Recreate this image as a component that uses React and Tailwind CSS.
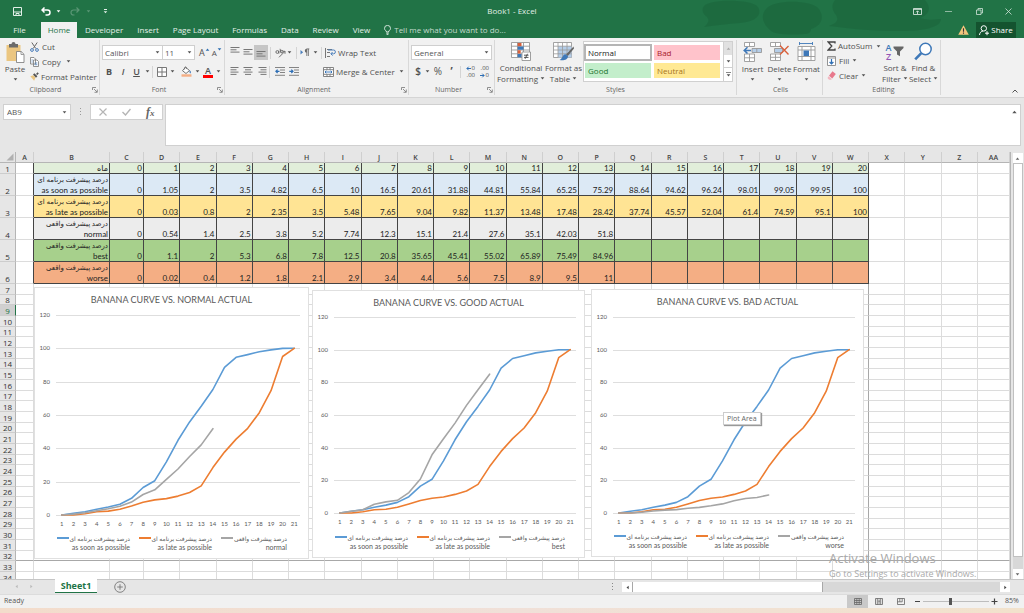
import React, { useState } from 'react';
import clsx from 'clsx';

const ui = "font-['Open_Sans','Noto_Sans','DejaVu_Sans',sans-serif]";
const calibri = "font-['Lato','DejaVu_Sans',sans-serif]";

const soon = [0, 1.05, 2, 3.5, 4.82, 6.5, 10, 16.5, 20.61, 31.88, 44.81, 55.84, 65.25, 75.29, 88.64, 94.62, 96.24, 98.01, 99.05, 99.95, 100];
const late = [0, 0.03, 0.8, 2, 2.35, 3.5, 5.48, 7.65, 9.04, 9.82, 11.37, 13.48, 17.48, 28.42, 37.74, 45.57, 52.04, 61.4, 74.59, 95.1, 100];
const normal = [0, 0.54, 1.4, 2.5, 3.8, 5.2, 7.74, 12.3, 15.1, 21.4, 27.6, 35.1, 42.03, 51.8];
const best = [0, 1.1, 2, 5.3, 6.8, 7.8, 12.5, 20.8, 35.65, 45.41, 55.02, 65.89, 75.49, 84.96];
const worse = [0, 0.02, 0.4, 1.2, 1.8, 2.1, 2.9, 3.4, 4.4, 5.6, 7.5, 8.9, 9.5, 11];
const months = Array.from({ length: 21 }, (_, i) => i);

const planned = 'درصد پیشرفت برنامه ای';
const actual = 'درصد پیشرفت واقعی';

const columns = 'A B C D E F G H I J K L M N O P Q R S T U V W X Y Z AA'.split(' ');

const dataRows = [
  { fa: planned, en: 'as soon as possible', values: soon, bg: 'bg-[#dce9f5]' },
  { fa: planned, en: 'as late as possible', values: late, bg: 'bg-[#ffe494]' },
  { fa: actual, en: 'normal', values: normal, bg: 'bg-[#ececec]' },
  { fa: actual, en: 'best', values: best, bg: 'bg-[#a7d08c]' },
  { fa: actual, en: 'worse', values: worse, bg: 'bg-[#f4ae84]' },
];

const tabs = ['Developer', 'Insert', 'Page Layout', 'Formulas', 'Data', 'Review', 'View'];

const Caret = ({ className }) => (
  <svg className={clsx('w-[5px] h-[3px] shrink-0', className)} viewBox="0 0 5 3">
    <path d="M0.7 0.3h3.6L2.5 2.5z" fill="currentColor" />
  </svg>
);

const Sep = () => <span className="w-px h-3 bg-[#d4d4d4] shrink-0" />;

const IconButton = ({ label, className, children }) => (
  <button aria-label={label} className={clsx('flex items-center justify-center shrink-0', className)}>
    {children}
  </button>
);

const Lines = ({ widths, align = 'left', top = 1 }) => (
  <svg width="10" height="11" viewBox="0 0 10 11" stroke="#777" strokeWidth="1">
    {widths.map((w, i) => {
      const x = align === 'left' ? 0.5 : align === 'right' ? 9.5 - w : 5 - w / 2;
      return <path key={i} d={`M${x} ${top + i * 2.3 + 0.5}h${w}`} />;
    })}
  </svg>
);

const Group = ({ title, launcher, className, children }) => (
  <section className={clsx('flex flex-col border-r border-[#d8d8d8] my-[2px] shrink-0', className)}>
    <div className="flex-1 flex min-h-0">{children}</div>
    <div className="h-[11px] flex items-center text-[#666]">
      <span className="flex-1 text-center leading-[11px] text-[7px]">{title}</span>
      {launcher && (
        <IconButton label={`${title} settings`} className="w-2 h-2">
          <svg width="6" height="6" viewBox="0 0 6 6" fill="none" stroke="#777" strokeWidth="0.8">
            <path d="M0.5 3V0.5H4M2 2l3 3M5.3 2.5v2.8H2.5" />
          </svg>
        </IconButton>
      )}
    </div>
  </section>
);

const BigButton = ({ icon, lines, caretBelow, className }) => (
  <button className={clsx('flex flex-col items-center pt-px shrink-0 leading-[11px]', className)}>
    <span className="h-[22px] flex items-center">{icon}</span>
    {lines.map((line, i) => (
      <span key={line} className="flex items-center gap-[2px] whitespace-nowrap">
        {line}
        {!caretBelow && i === lines.length - 1 && <Caret />}
      </span>
    ))}
    {caretBelow && <Caret className="mt-[4px]" />}
  </button>
);

const TitleBar = () => (
  <header className="relative bg-[#217346] text-white">
    {/* title bar artwork */}
    <svg className="absolute right-[70px] top-0" width="260" height="38" viewBox="0 0 260 38" fill="#1a643b" opacity="0.55">
      <path d="M10 6c6-7 48-7 54 1 5 9-4 15-18 16-12 1-24 2-36 4 4-4 6-6 3-10-4-3-6-7-3-11z" />
      <path d="M72 9c8-10 46-9 53 0 6 9 2 17-8 20 0 3-2 5-7 5-12 1-30 1-34-4-7-6-10-14-4-21z" />
      <path d="M141 0h90c7 8 4 15-5 18 10 3 17 1 21 1 0 9-20 12-38 12-28 0-52-2-74-5 8-3 10-6 7-11-4-5-5-10-1-15z" />
    </svg>
    <div className="relative h-[22px] flex items-center">
      <div className="flex-1 flex items-center pl-3">
        <IconButton label="Save" className="w-[11px]">
          <svg width="9" height="9" viewBox="0 0 9 9" fill="none" stroke="#e3efe8" strokeWidth="1">
            <path d="M0.5 0.5h8v8h-8zM0.5 5h8M3 8.5V6.5h3v2" />
          </svg>
        </IconButton>
        <IconButton label="Undo" className="w-[10px] ml-[18px]">
          <svg width="10" height="9" viewBox="0 0 10 9" fill="none" stroke="#fff" strokeWidth="1.5">
            <path d="M3.5 0.5L1 3l2.5 2.5M1 3h5.5a2.5 2.5 0 010 5H4.5" />
          </svg>
        </IconButton>
        <Caret className="ml-[5px]" />
        <IconButton label="Redo" className="w-[10px] ml-[9px] opacity-25">
          <svg width="10" height="9" viewBox="0 0 10 9" fill="none" stroke="#fff" strokeWidth="1.2">
            <path d="M6.5 0.5L9 3 6.5 5.5M9 3H3.5a2.5 2.5 0 000 5h1" />
          </svg>
        </IconButton>
        <Caret className="ml-[6px] opacity-25" />
        <IconButton label="Customize toolbar" className="ml-[12px] w-[5px]">
          <svg width="5" height="5" viewBox="0 0 5 5" fill="#e3efe8"><path d="M1 0h3v0.9H1zM0.7 2.2h3.6L2.5 4.3z" /></svg>
        </IconButton>
      </div>
      <h1 className="text-[8px] text-[#e3efe8]">Book1 - Excel</h1>
      <div className="flex-1 flex items-center justify-end gap-[21px] pr-3">
        <IconButton label="Ribbon display options" className="w-[9px] mr-[2px]">
          <svg width="9" height="7" viewBox="0 0 9 7" fill="none" stroke="#e6f0ea" strokeWidth="0.8">
            <path d="M0.5 0.5h8v6h-8zM0.5 1.4h8M4.5 6V3M3 4.3L4.5 2.8 6 4.3" />
          </svg>
        </IconButton>
        <IconButton label="Minimize" className="w-[7px]"><span className="w-[7px] h-px bg-[#8fb8a1]" /></IconButton>
        <IconButton label="Restore" className="w-[8px] ml-[2px]">
          <svg width="7" height="7" viewBox="0 0 7 7" fill="none" stroke="#d3e4da" strokeWidth="0.8">
            <path d="M0.5 2h4.5v4.5H0.5zM2 2V0.5h4.5V5H5" />
          </svg>
        </IconButton>
        <IconButton label="Close" className="w-[8px]">
          <svg width="7" height="7" viewBox="0 0 7 7" stroke="#d3e4da" strokeWidth="0.8"><path d="M0.5 0.5l6 6M6.5 0.5l-6 6" /></svg>
        </IconButton>
      </div>
    </div>
    <nav className="relative h-4 flex items-center text-[8px] text-[#e3efe8]">
      <button className="w-[39px]">File</button>
      <button className="w-[36px] h-4 ml-[2px] mr-px bg-[#f1f1f1] text-[#217346]">Home</button>
      {tabs.map((t) => (
        <button key={t} className="mx-[7px] whitespace-nowrap">{t}</button>
      ))}
      <label className="flex items-center flex-1 gap-[3px] ml-[7px]">
        <svg width="7" height="10" viewBox="0 0 7 10" fill="none" stroke="#e3efe8" strokeWidth="0.9">
          <path d="M2.3 7V6C0.9 5.2 0.5 4.3 0.5 3.4a3 3 0 016 0c0 .9-.4 1.8-1.8 2.6v1zM2.3 8.2h2.4M2.6 9.4h1.8" />
        </svg>
        <input
          aria-label="Tell me"
          placeholder="Tell me what you want to do..."
          className="w-[150px] bg-transparent outline-none placeholder:text-[#c3dacd]"
        />
      </label>
      <svg width="11" height="10" viewBox="0 0 11 10" className="mr-[7px]">
        <path d="M5.5 0.3L10.8 9.7H0.2z" fill="#f2c57c" />
        <path d="M5.5 3.2v3.6M5.5 7.6v1.2" stroke="#333" strokeWidth="1.1" />
      </svg>
      <button className="h-4 w-[40px] mr-[8px] bg-[#14532f] flex items-center justify-center gap-[2px] text-white">
        <svg width="10" height="11" viewBox="0 0 10 11" fill="none" stroke="#fff" strokeWidth="1">
          <circle cx="4.8" cy="3.4" r="2.7" />
          <path d="M0.5 10c.2-2.3 1.6-3.7 3.4-3.9M6 8.2h4M8 6.2v4" />
        </svg>
        Share
      </button>
    </nav>
  </header>
);

const Select = ({ label, value, className }) => (
  <span className={clsx('relative flex items-center h-[15px] bg-white border border-[#cfcfcf]', className)}>
    <select aria-label={label} className="appearance-none w-full h-full pl-[2px] bg-transparent outline-none text-[#555]">
      <option>{value}</option>
    </select>
    <Caret className="absolute right-[2px] pointer-events-none" />
  </span>
);

const ClipboardGroup = () => (
  <Group title="Clipboard" launcher className="w-[100px]">
    <BigButton
      className="w-[30px]"
      caretBelow
      lines={['Paste']}
      icon={
        <svg width="19" height="21" viewBox="0 0 19 21">
          <path d="M0.5 3h14v16h-14z" fill="#ebc681" />
          <path d="M3 2h2.5a2 2 0 014 0H12v3.5H3z" fill="#6b6b6b" />
          <path d="M10.5 9.5h4.7l2.8 2.8v8.2h-7.5z" fill="#fff" stroke="#777" strokeWidth="0.8" />
          <path d="M15 9.7v2.8h2.8" fill="none" stroke="#777" strokeWidth="0.7" />
        </svg>
      }
    />
    <div className="flex flex-col items-start gap-[4px] pt-px">
      <button className="flex items-center gap-[3px] h-[11px]">
        <svg width="9" height="10" viewBox="0 0 9 10" fill="none" strokeWidth="1">
          <path d="M1.8 0.5l4 6M7.2 0.5l-4 6" stroke="#666" />
          <circle cx="2" cy="8" r="1.4" stroke="#4a7ebb" /><circle cx="7" cy="8" r="1.4" stroke="#4a7ebb" />
        </svg>
        Cut
      </button>
      <button className="flex items-center gap-[3px] h-[11px]">
        <svg width="9" height="10" viewBox="0 0 9 10" fill="#fff" stroke="#777" strokeWidth="0.8">
          <path d="M0.5 0.5h3.5l1.5 1.5v5h-5zM3.5 3h3.5l1.5 1.5v5h-5z" />
          <path d="M4.7 6h2.6M4.7 7.7h2.6M1.5 3h1.3M1.5 5h1.3" stroke="#4a7ebb" />
        </svg>
        Copy <Caret className="ml-[2px]" />
      </button>
      <button className="flex items-center gap-[2px] h-[11px] whitespace-nowrap">
        <svg width="9" height="9" viewBox="0 0 9 9">
          <path d="M0.3 4.2l3-1 2.2 2.3-1.4 3.2z" fill="#ebc681" />
          <path d="M3 2.6l1.4-1.3 3 3L6 5.7zM6 2l1.6-1.8L8.8 1.4 7.3 3z" fill="#555" />
        </svg>
        Format Painter
      </button>
    </div>
  </Group>
);

const FontGroup = () => (
  <Group title="Font" launcher className="w-[125px] pl-[2px]">
    <div className="flex flex-col gap-[5px] pt-[5px]">
      <div className="flex items-center">
        <Select label="Font" value="Calibri" className="w-[61px]" />
        <Select label="Font size" value="11" className="w-[33px] -ml-px" />
        <IconButton label="Increase font size" className="ml-[4px] text-[9px]">
          A<Caret className="rotate-180 mb-[7px] text-[#2b6cb0]" />
        </IconButton>
        <IconButton label="Decrease font size" className="ml-[2px] text-[8px]">
          A<Caret className="mb-[7px] text-[#2b6cb0]" />
        </IconButton>
      </div>
      <div className="flex items-center h-[13px] text-[9px]">
        <IconButton label="Bold" className="w-[14px] font-bold">B</IconButton>
        <IconButton label="Italic" className="w-[14px] italic font-semibold">I</IconButton>
        <IconButton label="Underline" className="w-[13px] underline font-semibold">U</IconButton>
        <Caret className="mx-[2px]" />
        <Sep />
        <IconButton label="Borders" className="ml-[4px]">
          <svg width="10" height="10" viewBox="0 0 10 10" fill="#fff" stroke="#777"><path d="M0.5 0.5h9v9h-9zM5 0.5v9M0.5 5h9" /></svg>
        </IconButton>
        <Caret className="mx-[3px]" />
        <IconButton label="Fill color" className="ml-[3px]">
          <svg width="11" height="11" viewBox="0 0 11 11">
            <path d="M4.5 1.2L8.5 4.5 5 7.5 1.5 4.7z" fill="#fff" stroke="#666" strokeWidth="0.9" />
            <path d="M3.6 3.5V1.5a1 1 0 011.8 0v1.5" fill="none" stroke="#666" strokeWidth="0.7" />
            <path d="M8.6 4.2c1.5.8 1.6 2 .9 3.4-1-.8-1.3-1.7-.9-3.4z" fill="#4a7ebb" />
            <path d="M0.5 8.3h10v2.4h-10z" fill="#f4ae84" />
          </svg>
        </IconButton>
        <Caret className="mx-[3px]" />
        <IconButton label="Font color" className="w-[10px] flex-col leading-[10px] font-semibold">
          A<span className="w-[10px] h-[3px] -mt-px bg-[#ff0000]" />
        </IconButton>
        <Caret className="ml-[3px]" />
      </div>
    </div>
  </Group>
);

const AlignmentGroup = () => (
  <Group title="Alignment" launcher className="w-[184px] pl-[3px]">
    <div className="flex flex-col gap-[5px] pt-[5px]">
      <div className="flex items-center h-[15px]">
        <IconButton label="Top align" className="w-[13px] h-[15px]"><Lines widths={[9, 6, 9]} top={0} /></IconButton>
        <IconButton label="Middle align" className="w-[13px] h-[15px]"><Lines widths={[9, 6, 9]} top={2} /></IconButton>
        <IconButton label="Bottom align" className="w-[14px] h-[15px] bg-[#c6c6c6]"><Lines widths={[9, 6, 9]} top={4} /></IconButton>
        <span className="w-px h-3 mx-[2px] bg-[#d4d4d4]" />
        <IconButton label="Orientation" className="ml-[2px]">
          <svg width="11" height="10" viewBox="0 0 11 10" fill="none" stroke="#666" strokeWidth="0.9">
            <circle cx="2.3" cy="4" r="1.4" /><path d="M3.9 2.6v3M5 0.8l1.2 4" /><circle cx="6.8" cy="3.6" r="1.3" />
            <path d="M4 9.3l6-6M10 5.8V3.3H7.6" />
          </svg>
        </IconButton>
        <Caret className="ml-px mr-[4px]" />
        <Sep />
        <IconButton label="Text direction" className="ml-[3px]">
          <svg width="10" height="9" viewBox="0 0 10 9">
            <path d="M0.5 2v4.4l2.6-2.2z" fill="#4a7ebb" />
            <path d="M6.8 0.9V8M8.4 0.9V8M9.3 0.9H6.6" stroke="#666" strokeWidth="0.8" fill="none" />
            <path d="M6.8 0.7a2 2 0 000 4z" fill="#666" />
          </svg>
        </IconButton>
        <Caret className="ml-[3px] mr-[3px]" />
        <Sep />
        <button className="flex items-center gap-[2px] ml-[3px] whitespace-nowrap">
          <svg width="11" height="10" viewBox="0 0 11 10" fill="none" strokeWidth="1">
            <path d="M0.5 0v10M2 1.5h5M2 4.5h3M2 8.5h3" stroke="#777" />
            <path d="M3 2h5.5a1.7 1.7 0 010 3.8H6M7.6 4L5.8 5.8l1.8 1.8" stroke="#4a7ebb" />
          </svg>
          Wrap Text
        </button>
      </div>
      <div className="flex items-center h-[13px]">
        <IconButton label="Align left" className="w-[13px]"><Lines widths={[8, 6, 8, 6]} /></IconButton>
        <IconButton label="Center" className="w-[14px]"><Lines widths={[9, 6, 9, 6]} align="center" /></IconButton>
        <IconButton label="Align right" className="w-[14px]"><Lines widths={[8, 6, 8, 6]} align="right" /></IconButton>
        <Sep />
        <IconButton label="Decrease indent" className="ml-[5px]">
          <svg width="10" height="9" viewBox="0 0 10 9" stroke="#777" strokeWidth="0.9" fill="none">
            <path d="M0 0.5h10M5 3h5M5 5.5h5M0 8.3h10" /><path d="M4.5 4.3H1M2.6 2.6L0.9 4.3 2.6 6" stroke="#2f6fb5" strokeWidth="1.2" />
          </svg>
        </IconButton>
        <IconButton label="Increase indent" className="ml-[4px]">
          <svg width="10" height="9" viewBox="0 0 10 9" stroke="#777" strokeWidth="0.9" fill="none">
            <path d="M0 0.5h10M5 3h5M5 5.5h5M0 8.3h10" /><path d="M0.3 4.3h3.5M2.3 2.6L4 4.3 2.3 6" stroke="#2f6fb5" strokeWidth="1.2" />
          </svg>
        </IconButton>
        <button className="flex items-center gap-[2px] ml-[24px] whitespace-nowrap">
          <svg width="11" height="10" viewBox="0 0 11 10" fill="#fff" stroke="#777" strokeWidth="0.9">
            <path d="M0.5 0.5h10v9h-10zM0.5 2.7h10M0.5 7.3h10M4 0.5v2.2M7 0.5v2.2M4 7.3v2.2M7 7.3v2.2" />
            <path d="M2 5h7M3.3 3.7L2 5l1.3 1.3M7.7 3.7L9 5 7.7 6.3" stroke="#2f6fb5" fill="none" />
          </svg>
          Merge &amp; Center
          <Caret className="ml-[2px]" />
        </button>
      </div>
    </div>
  </Group>
);

const DecimalIcon = ({ increase }) => (
  <span className="grid grid-cols-2 w-[9px] text-[6px] leading-[7px] text-right">
    <svg width="5" height="5" viewBox="0 0 5 5" className={increase ? 'mt-px' : 'order-3 mt-px rotate-180'} fill="none" stroke="#2f6fb5">
      <path d="M5 2.5H1M2.7 0.7L0.9 2.5l1.8 1.8" />
    </svg>
    <span className={increase ? 'text-right' : 'order-4'}>0</span>
    <span className="col-span-2">.00</span>
  </span>
);

const NumberGroup = () => (
  <Group title="Number" launcher className="w-[86px] pl-[2px]">
    <div className="flex flex-col gap-[5px] pt-[5px]">
      <Select label="Number format" value="General" className="w-[81px]" />
      <div className="flex items-center h-[13px] text-[10px]">
        <IconButton label="Currency" className="w-[14px] font-semibold">$</IconButton>
        <Caret />
        <IconButton label="Percent style" className="w-[16px]">%</IconButton>
        <IconButton label="Comma style" className="w-[11px] font-bold">’</IconButton>
        <span className="w-[3px]" />
        <Sep />
        <IconButton label="Increase decimal" className="ml-[5px]"><DecimalIcon increase /></IconButton>
        <IconButton label="Decrease decimal" className="ml-[5px]"><DecimalIcon /></IconButton>
      </div>
    </div>
  </Group>
);

const gallery = [
  ['Normal', 'bg-white text-[#222] outline-2 -outline-offset-1 outline-[#b5b5b5]'],
  ['Bad', 'bg-[#ffc3cb] text-[#a8202c]'],
  ['Good', 'bg-[#c3eecb] text-[#1c7430]'],
  ['Neutral', 'bg-[#ffe994] text-[#a8741c]'],
];

const StylesGroup = () => (
  <Group title="Styles" className="w-[242px]">
    <BigButton
      className="w-[50px] ml-px"
      lines={['Conditional', 'Formatting']}
      icon={
        <svg width="20" height="19" viewBox="0 0 20 19">
          <path d="M0.5 0.5h18v15h-18zM0.5 4.2h18M0.5 8h18M0.5 11.8h18M6.5 0.5v15M12.5 0.5v15" fill="#fff" stroke="#999" strokeWidth="0.9" />
          <path d="M6.7 1h3.8v3.2H6.7zM6.7 8.2h3v3.4h-3z" fill="#d9603b" /><path d="M6.7 4.5h5.8v3.3H6.7zM6.7 12h4v3.2h-4z" fill="#3e78b8" />
          <path d="M11 10h8.5v8.5H11z" fill="#fff" stroke="#888" strokeWidth="0.8" />
          <path d="M13 13.2h4.5M13 15.4h4.5M16.5 11.8l-2.4 5" stroke="#444" strokeWidth="0.9" />
        </svg>
      }
    />
    <BigButton
      className="w-[35px]"
      lines={['Format as', 'Table']}
      icon={
        <svg width="21" height="19" viewBox="0 0 21 19">
          <path d="M0.5 0.5h18v15h-18z" fill="#fff" stroke="#999" strokeWidth="0.9" />
          <path d="M5 4.2h13.5v11.3H5z" fill="#b4cde8" />
          <path d="M0.5 4.2h18M0.5 8h18M0.5 11.8h18M5 0.5v15M9.5 0.5v15M14 0.5v15" stroke="#999" strokeWidth="0.8" />
          <path d="M20.5 4.5L13 12.5l1.8 1.6L21 6.5z" fill="#666" /><path d="M12.6 12.3c-3 0-2.5 3.8-6 5.7 4 .7 8 0 8.4-3.8z" fill="#3e78b8" />
        </svg>
      }
    />
    <div className="flex ml-[2px] mt-px h-[41px] flex-1 mr-[3px] border border-[#d0d0d0] bg-white text-[8px]">
      <div className="flex-1 grid grid-cols-2 gap-[3px] p-[3px] pl-px">
        {gallery.map(([name, style]) => (
          <button key={name} className={clsx('text-left pl-[3px]', style)}>{name}</button>
        ))}
      </div>
      <div className="w-[9px] flex flex-col border-l border-[#d0d0d0]">
        <IconButton label="Scroll styles up" className="flex-1 bg-[#e1e1e1] text-[#aaa]"><Caret className="rotate-180" /></IconButton>
        <IconButton label="Scroll styles down" className="flex-1"><Caret /></IconButton>
        <IconButton label="More styles" className="flex-1 flex-col gap-px border-t border-[#d0d0d0]">
          <span className="w-[5px] h-px bg-[#888]" /><Caret />
        </IconButton>
      </div>
    </div>
  </Group>
);

const CellsGroup = () => (
  <Group title="Cells" className="w-[86px] pl-[2px]">
    <BigButton
      className="w-[27px]"
      caretBelow
      lines={['Insert']}
      icon={
        <svg width="19" height="20" viewBox="0 0 19 20" fill="#fff" stroke="#999" strokeWidth="0.9">
          <path d="M1.5 0.5h10v4h-10zM6.5 0.5v4M1.5 12h10v7.5h-10zM6.5 12v7.5M1.5 15.8h10" />
          <path d="M9 6.5h9.5v4H9zM13.8 6.5v4" fill="#b4cde8" />
          <path d="M8 8.4H1.5M4.5 5.3L1.2 8.4l3.3 3.1" fill="none" stroke="#3e78b8" strokeWidth="1.5" />
        </svg>
      }
    />
    <BigButton
      className="w-[27px]"
      caretBelow
      lines={['Delete']}
      icon={
        <svg width="19" height="20" viewBox="0 0 19 20" fill="#fff" stroke="#999" strokeWidth="0.9">
          <path d="M0.5 0.5h10v4h-10zM5.5 0.5v4M0.5 12h10v6.5h-10zM5.5 12v6.5M0.5 15.3h10" />
          <path d="M4.5 6.5h8v4h-8z" fill="#b4cde8" />
          <path d="M10 3.5l8.5 9M18.5 4L10 12.5" stroke="#d9603b" strokeWidth="1.4" />
        </svg>
      }
    />
    <BigButton
      className="w-[27px]"
      caretBelow
      lines={['Format']}
      icon={
        <svg width="19" height="20" viewBox="0 0 19 20" fill="#fff" stroke="#999" strokeWidth="0.9">
          <path d="M1 4.5h17v14H1zM1 8h17M1 14.5h17M5 4.5v14M14 4.5v14" />
          <path d="M6.5 8.5h5.5v5.5H6.5z" fill="#3e78b8" stroke="none" />
          <path d="M2.5 1.5h13M2.5 0v3M15.5 0v3" stroke="#3e78b8" />
        </svg>
      }
    />
  </Group>
);

const EditingGroup = () => (
  <Group title="Editing" className="w-[118px] pl-[4px]">
    <div className="flex flex-col items-start gap-[2px] w-[54px]">
      <button className="flex items-center gap-[2px] h-[12px]">
        <svg width="9" height="10" viewBox="0 0 9 10" fill="none" stroke="#444" strokeWidth="1.3"><path d="M8 2.5V1H1.2l3.6 4-3.6 4H8V7.5" /></svg>
        AutoSum <Caret className="ml-[2px]" />
      </button>
      <button className="flex items-center gap-[3px] h-[13px]">
        <svg width="9" height="10" viewBox="0 0 9 10" fill="#fff" stroke="#888" strokeWidth="0.9">
          <path d="M0.5 0.5h8v9h-8zM0.5 2h8" /><path d="M4.5 3v5M2.6 6l1.9 2 1.9-2" stroke="#2f6fb5" strokeWidth="1.2" fill="none" />
        </svg>
        Fill <Caret />
      </button>
      <button className="flex items-center gap-[3px] h-[13px]">
        <svg width="9" height="9" viewBox="0 0 9 9"><path d="M5.5 0.3L8.8 3 5.3 7.5 2 4.8z" fill="#e8788c" /><path d="M1.6 5.3l3.2 2.6-.6.8H2L0.5 7z" fill="#f3b5bf" /></svg>
        Clear <Caret />
      </button>
    </div>
    <BigButton
      className="w-[28px]"
      lines={['Sort &', 'Filter']}
      icon={
        <span className="flex items-center">
          <span className="flex flex-col leading-[9px] text-[9px] font-semibold">
            <span className="text-[#3e78b8]">A</span><span className="text-[#9355b5]">Z</span>
          </span>
          <svg width="11" height="11" viewBox="0 0 11 11" className="ml-[2px]"><path d="M0.5 0.5h10v1.5L7 5.5v4.8L4 8.5v-3L0.5 2z" fill="#666" /></svg>
        </span>
      }
    />
    <BigButton
      className="w-[29px]"
      lines={['Find &', 'Select']}
      icon={
        <svg width="19" height="19" viewBox="0 0 19 19" fill="none" stroke="#3e78b8">
          <circle cx="11.5" cy="7" r="5.7" fill="#fff" strokeWidth="1.5" /><path d="M7.3 11.2L1.2 17.4" strokeWidth="2.6" />
        </svg>
      }
    />
  </Group>
);

const Ribbon = () => (
  <div className="h-[60px] flex bg-[#f1f1f1] border-b border-[#d5d5d5] text-[8px] text-[#505050]">
    <ClipboardGroup />
    <FontGroup />
    <AlignmentGroup />
    <NumberGroup />
    <StylesGroup />
    <CellsGroup />
    <EditingGroup />
    <div className="flex-1 flex items-end justify-end pr-[6px] pb-[4px]">
      <IconButton label="Collapse ribbon">
        <svg width="6" height="4" viewBox="0 0 6 4" fill="none" stroke="#555"><path d="M0.5 3.5L3 1l2.5 2.5" /></svg>
      </IconButton>
    </div>
  </div>
);

const FormulaBar = () => (
  <div className="flex items-start pt-[6px] pb-[6px] pl-[3px] pr-[3px] bg-[#e6e6e6] text-[8px]">
    <div className="relative flex items-center h-4 w-[68px] bg-white border border-[#d0d0d0]">
      <input aria-label="Name box" defaultValue="AB9" className="w-full pl-[3px] bg-transparent outline-none text-[#555]" />
      <Caret className="absolute right-[3px] text-[#555]" />
    </div>
    <svg width="3" height="16" viewBox="0 0 3 16" className="mx-[8px]" fill="#999"><path d="M1 4h1v1H1zM1 7h1v1H1zM1 10h1v1H1z" /></svg>
    <div className="flex items-center justify-around h-4 w-[73px] bg-white border border-[#d0d0d0]">
      <IconButton label="Cancel">
        <svg width="8" height="8" viewBox="0 0 8 8" stroke="#b5b5b5" strokeWidth="1.2"><path d="M0.5 0.5l7 7M7.5 0.5l-7 7" /></svg>
      </IconButton>
      <IconButton label="Enter">
        <svg width="9" height="8" viewBox="0 0 9 8" fill="none" stroke="#b5b5b5" strokeWidth="1.4"><path d="M0.5 4l3 3 5-6" /></svg>
      </IconButton>
      <IconButton label="Insert function" className="font-['Liberation_Serif',serif] italic font-bold text-[12px] leading-none text-[#666]">
        f<span className="text-[9px] mt-[3px]">x</span>
      </IconButton>
    </div>
    <div className="relative flex-1 ml-[2px] h-[42px] bg-white border border-[#d0d0d0]">
      <textarea aria-label="Formula" className="block w-full h-full resize-none outline-none" />
      <svg width="5" height="4" viewBox="0 0 5 4" className="absolute right-[3px] top-[5px]"><path d="M0.3 3.3h4.4L2.5 0.8z" fill="#555" /></svg>
    </div>
  </div>
);

const Sheet = () => (
  <table className={clsx('table-fixed w-full border-separate border-spacing-0 text-[8px] leading-[9px]', calibri)}>
    <colgroup>
      <col className="w-4" />
      <col className="w-[18px]" />
      <col className="w-[76px]" />
      <col className="w-[34px]" />
      {columns.slice(3, -1).map((c) => <col key={c} />)}
      <col className="w-8" />
    </colgroup>
    <thead>
      <tr className={clsx('h-[11px] bg-[#e6e6e6] text-[#444] text-[7px]', ui)}>
        <th className="p-0 border-r border-b border-[#b5b5b5]">
          <svg width="8" height="8" viewBox="0 0 8 8" className="ml-auto mr-px"><path d="M7.5 0.5v7h-7z" fill="#b0b0b0" /></svg>
        </th>
        {columns.map((c) => (
          <th key={c} className="p-0 font-semibold border-r border-b border-[#b5b5b5] border-r-[#cfcfcf]">{c}</th>
        ))}
      </tr>
    </thead>
    <tbody>
      <tr className="h-[11px] align-bottom">
        <RowHead n={1} />
        <td className="p-0 border-r border-b border-[#dcdcdc] border-r-[#444]" />
        <DataCell className="bg-[#e1eeda]">ماه</DataCell>
        {months.map((m) => <DataCell key={m} className="bg-[#e1eeda]">{m}</DataCell>)}
        <EmptyCells count={4} />
      </tr>
      {dataRows.map((row, i) => (
        <tr key={row.en} className="h-[22px] align-bottom">
          <RowHead n={i + 2} />
          <td className="p-0 border-r border-b border-[#dcdcdc] border-r-[#444]" />
          <DataCell className={row.bg}>
            <div className="h-[21px] flex flex-col justify-between leading-[10px] whitespace-nowrap">
              <span dir="rtl" className="text-[7px]">{row.fa}</span>
              <span>{row.en}</span>
            </div>
          </DataCell>
          {months.map((m) => <DataCell key={m} className={row.bg}>{row.values[m]}</DataCell>)}
          <EmptyCells count={4} />
        </tr>
      ))}
      {Array.from({ length: 28 }, (_, i) => i + 7).map((n) => (
        <tr key={n} className={n % 3 === 2 ? 'h-[10px]' : 'h-[11px]'}>
          <RowHead n={n} active={n === 9} />
          {columns.map((c) => (
            <td
              key={c}
              className={clsx(
                'p-0 border-r border-b',
                c === 'W' ? 'border-r-[#a8a8a8]' : 'border-r-[#dcdcdc]',
                n === 32 ? 'border-b-[#a8a8a8]' : 'border-b-[#dcdcdc]'
              )}
            />
          ))}
        </tr>
      ))}
    </tbody>
  </table>
);

const RowHead = ({ n, active }) => (
  <th
    className={clsx(
      'p-0 font-normal align-bottom border-r border-b border-b-[#cdcdcd]',
      active ? 'bg-[#d0d0d0] text-[#217346] border-r-[#217346]' : 'bg-[#e6e6e6] text-[#333] border-r-[#b5b5b5]',
      ui
    )}
  >
    {n}
  </th>
);

const DataCell = ({ className, children }) => (
  <td className={clsx('p-0 pr-px text-right text-[#222] border-r border-b border-[#444]', className)}>{children}</td>
);

const EmptyCells = ({ count }) =>
  Array.from({ length: count }, (_, i) => <td key={i} className="p-0 border-r border-b border-[#dcdcdc]" />);

const Chart = ({ title, name, values, width, height, plot, className }) => {
  const { left, top, right, bottom } = plot;
  const step = (right - left) / 21;
  const x = (i) => left + step * (i + 0.5);
  const y = (v) => bottom - ((bottom - top) * v) / 120;
  const points = (arr) => arr.map((v, i) => `${x(i).toFixed(1)},${y(v).toFixed(1)}`).join(' ');
  const legend = [
    [planned, 'as soon as possible', 'bg-[#5b9bd5]'],
    [planned, 'as late as possible', 'bg-[#ed7d31]'],
    [actual, name, 'bg-[#a5a5a5]'],
  ];

  return (
    <figure className={clsx('absolute flex flex-col bg-white border border-[#e0e0e0] text-[#595959]', calibri, className)}>
      <figcaption className="absolute inset-x-0 top-[6px] text-center text-[9px] leading-3">{title}</figcaption>
      <svg width={width} height={height} className="block">
        {[0, 20, 40, 60, 80, 100, 120].map((v) => (
          <g key={v}>
            <path d={`M${left} ${Math.round(y(v)) + 0.5}H${right}`} stroke="#dedede" />
            <text x={left - 6} y={y(v) + 2} textAnchor="end" fontSize="6" fill="#595959">{v}</text>
          </g>
        ))}
        {months.map((m) => (
          <text key={m} x={x(m)} y={bottom + 11} textAnchor="middle" fontSize="6" fill="#595959">{m + 1}</text>
        ))}
        <g fill="none" strokeWidth="1.6" strokeLinejoin="round" strokeLinecap="round">
          <polyline points={points(soon)} stroke="#5b9bd5" />
          <polyline points={points(late)} stroke="#ed7d31" />
          <polyline points={points(values)} stroke="#a5a5a5" />
        </g>
      </svg>
      <ul className="flex gap-[9px] ml-[22px] text-[7px] leading-[9px] whitespace-nowrap">
        {legend.map(([fa, en, color]) => (
          <li key={en} className="flex items-start">
            <span className={clsx('w-3 h-[2px] mt-[3px]', color)} />
            <span className={clsx('flex flex-col text-right', fa === planned ? 'w-[61px]' : 'w-[54px]')}>
              <span dir="rtl" className="text-[6px]">{fa}</span>
              <span>{en}</span>
            </span>
          </li>
        ))}
      </ul>
    </figure>
  );
};

const SheetArea = () => (
  <main className="flex-1 min-h-0 flex bg-[#e6e6e6]">
    <div className="relative flex-1 overflow-hidden bg-white">
      <Sheet />
      <Chart
        title="BANANA CURVE VS. NORMAL ACTUAL" name="normal" values={normal}
        width={272} height={246} plot={{ left: 21, top: 27, right: 265, bottom: 227 }}
        className="left-[34px] top-[135px] w-[275px] h-[272px]"
      />
      <Chart
        title="BANANA CURVE VS. GOOD ACTUAL" name="best" values={best}
        width={270} height={242} plot={{ left: 21, top: 26, right: 263, bottom: 222 }}
        className="left-[312px] top-[138px] w-[273px] h-[268px]"
      />
      <Chart
        title="BANANA CURVE VS. BAD ACTUAL" name="worse" values={worse}
        width={270} height={242} plot={{ left: 21, top: 27, right: 263, bottom: 223 }}
        className="left-[591px] top-[137px] w-[273px] h-[268px]"
      />
      <div className="absolute left-[723px] top-[260px] px-[3px] h-[13px] leading-[12px] text-[7px] text-[#666] bg-white border border-[#ccc] shadow-[1px_1px_1px_#999]">
        Plot Area
      </div>
    </div>
    <div className="w-[14px] flex flex-col items-center pt-px border-l border-[#b5b5b5]">
      <IconButton label="Scroll up" className="w-[10px] h-[10px] bg-white text-[#666]"><Caret className="rotate-180" /></IconButton>
      <div className="w-[10px] flex-1 flex bg-[#d8d8d8]">
        <div className="w-full h-[97%] bg-white border border-[#c0c0c0]" />
      </div>
      <IconButton label="Scroll down" className="w-[10px] h-[10px] bg-white text-[#666]"><Caret /></IconButton>
    </div>
  </main>
);

const SheetTabs = () => (
  <div className="h-[15px] flex items-start bg-[#e6e6e6] border-t border-[#c6c6c6]">
    <div className="flex gap-[10px] pl-[14px] pt-[5px] w-[55px] text-[#bbb]">
      <IconButton label="Previous sheet"><Caret className="rotate-90" /></IconButton>
      <IconButton label="Next sheet"><Caret className="-rotate-90" /></IconButton>
    </div>
    <button className="w-[42px] h-[14px] -mt-px bg-white border-b border-[#217346] text-[#217346] text-[9px] leading-[12px] font-bold">Sheet1</button>
    <IconButton label="New sheet" className="ml-[17px] mt-px">
      <svg width="12" height="12" viewBox="0 0 12 12" fill="none" stroke="#777" strokeWidth="0.9">
        <circle cx="6" cy="6" r="5.3" /><path d="M3.2 6h5.6M6 3.2v5.6" />
      </svg>
    </IconButton>
    <div className="flex-1" />
    <svg width="3" height="10" viewBox="0 0 3 10" className="mr-[8px] mt-[2px]" fill="#888"><path d="M1 1h1v1H1zM1 4h1v1H1zM1 7h1v1H1z" /></svg>
    <div className="flex w-[388px] h-[10px] mt-[2px] mr-[14px] bg-[#d8d8d8]">
      <IconButton label="Scroll left" className="w-[10px] bg-white text-[#444]"><Caret className="rotate-90" /></IconButton>
      <div className="flex-1 flex"><div className="w-[52%] bg-white border-x border-[#a8a8a8]" /></div>
      <IconButton label="Scroll right" className="w-[10px] bg-white text-[#444]"><Caret className="-rotate-90" /></IconButton>
    </div>
  </div>
);

const StatusBar = () => {
  const [zoom, setZoom] = useState(42);
  return (
    <footer className="h-[14px] flex items-center bg-[#f1f1f1] border-t border-[#dcdcdc] text-[7px] text-[#555]">
      <span className="flex-1 pl-[4px]">Ready</span>
      <IconButton label="Normal view" className="w-[21px] h-full bg-[#c9c9c9]">
        <svg width="8" height="7" viewBox="0 0 8 7" fill="none" stroke="#666" strokeWidth="0.8"><path d="M0.5 0.5h7v6h-7zM0.5 2.5h7M0.5 4.5h7M2.8 0.5v6M5.2 0.5v6" /></svg>
      </IconButton>
      <IconButton label="Page layout view" className="w-[22px]">
        <svg width="8" height="7" viewBox="0 0 8 7" fill="none" stroke="#666" strokeWidth="0.8"><path d="M0.5 0.5h7v6h-7zM2.3 0.5v6M5.7 0.5v6M3.2 2.2h1.8M3.2 3.6h1.8M3.2 5h1.8" /></svg>
      </IconButton>
      <IconButton label="Page break view" className="w-[22px]">
        <svg width="8" height="7" viewBox="0 0 8 7" fill="none" stroke="#666" strokeWidth="0.8"><path d="M0.5 0.5h7v6h-7zM2.8 0.5v3.3H0.5M5.2 0.5v3.3H2.8" /></svg>
      </IconButton>
      <IconButton label="Zoom out" className="ml-[2px]">
        <svg width="7" height="7" viewBox="0 0 7 7" stroke="#444"><path d="M1 3.5h5" /></svg>
      </IconButton>
      <input
        type="range"
        aria-label="Zoom"
        value={zoom}
        onChange={(e) => setZoom(e.target.value)}
        className="appearance-none w-[66px] h-px mx-[2px] bg-[#bdbdbd] [&::-webkit-slider-thumb]:appearance-none [&::-webkit-slider-thumb]:w-[3px] [&::-webkit-slider-thumb]:h-[7px] [&::-webkit-slider-thumb]:bg-[#555]"
      />
      <IconButton label="Zoom in">
        <svg width="7" height="7" viewBox="0 0 7 7" stroke="#444" strokeWidth="1.2"><path d="M0.5 3.5h6M3.5 0.5v6" /></svg>
      </IconButton>
      <span className="ml-[7px] w-[19px]">85%</span>
    </footer>
  );
};

const App = () => (
  <div className={clsx('relative h-screen flex flex-col overflow-hidden', ui)}>
    <TitleBar />
    <Ribbon />
    <FormulaBar />
    <SheetArea />
    <SheetTabs />
    <StatusBar />
    <div className="h-[5px] bg-gradient-to-r from-[#f3dccb] via-[#f0e0d8] to-[#f2e2cc]" />
    <div className="absolute right-[43px] bottom-[32px] w-[152px] whitespace-nowrap pointer-events-none text-[#a9a9a9]">
      <p className="text-[13px] leading-[17px]">Activate Windows</p>
      <p className="text-[9px] leading-[14px]">Go to Settings to activate Windows.</p>
    </div>
  </div>
);

export default App;
